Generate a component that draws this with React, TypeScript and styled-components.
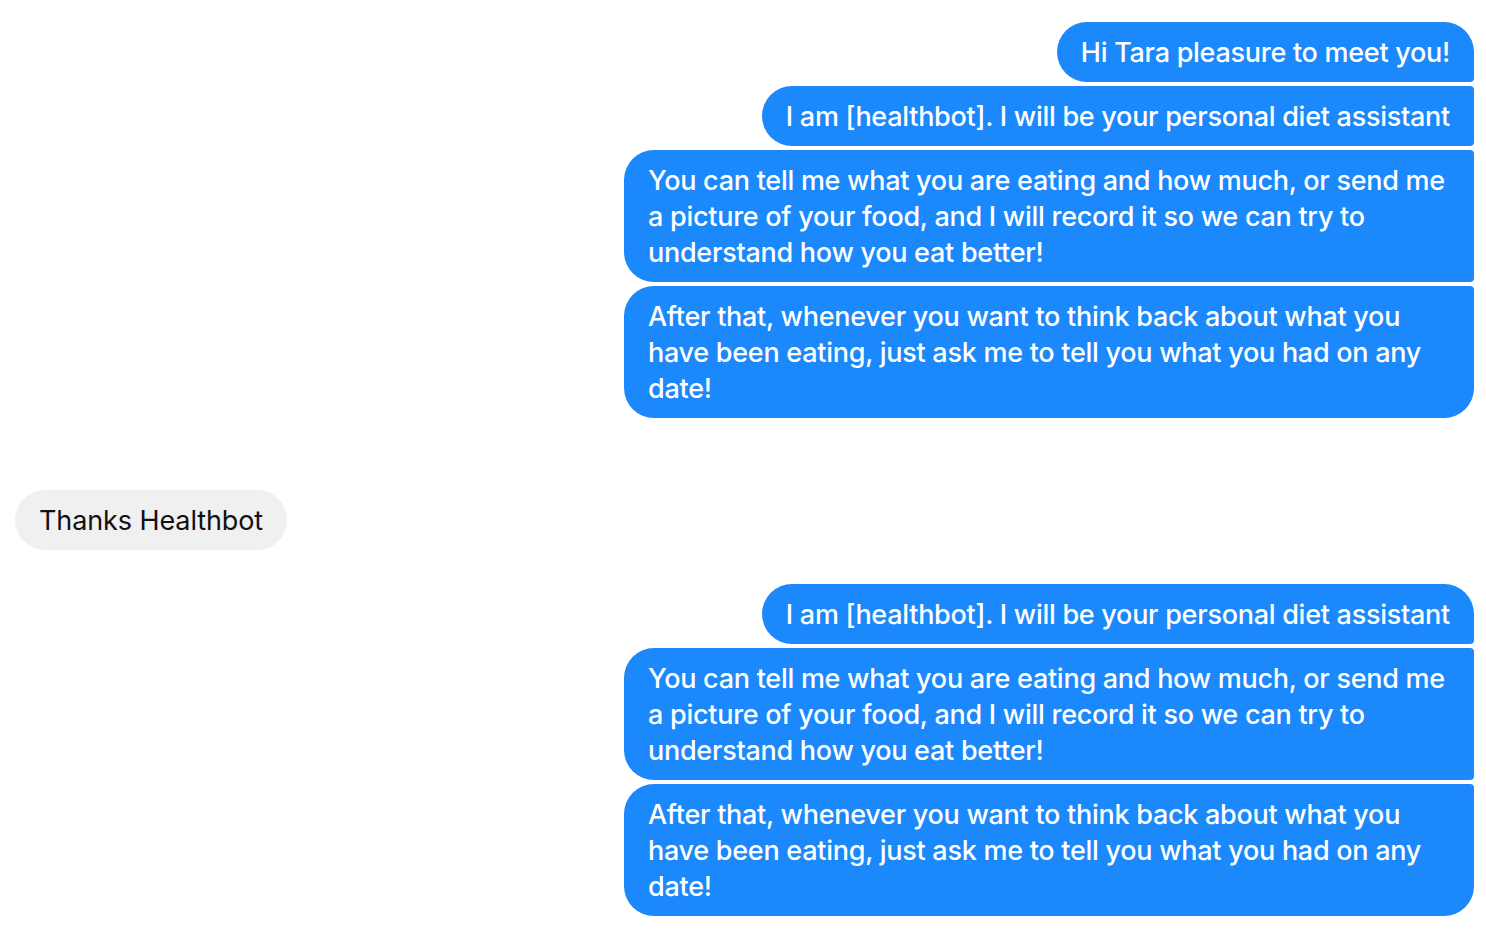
import React from "react";
import styled, { createGlobalStyle } from "styled-components";

const Global = createGlobalStyle`
  html, body { margin: 0; padding: 0; background: #ffffff; }
  body { font-family: "Inter", "Liberation Sans", sans-serif; -webkit-font-smoothing: antialiased; }
`;

const Page = styled.div`
  display: flex;
  flex-direction: column;
  padding: 22px 12px 0 15px;
`;

const Group = styled.div<{ $side: "left" | "right"; $mt?: number }>`
  display: flex;
  flex-direction: column;
  align-items: ${(p) => (p.$side === "right" ? "flex-end" : "flex-start")};
  gap: 4px;
  margin-top: ${(p) => p.$mt ?? 0}px;
`;

type Pos = "single" | "first" | "middle" | "last";

const radius = (side: "left" | "right", pos: Pos) => {
  const big = 30;
  const small = 4;
  if (pos === "single") return `${big}px`;
  const topInner = pos === "first" ? big : small;
  const bottomInner = pos === "last" ? big : small;
  if (side === "right") {
    return `${big}px ${topInner}px ${bottomInner}px ${big}px`;
  }
  return `${topInner}px ${big}px ${big}px ${bottomInner}px`;
};

const Bubble = styled.div<{ $side: "left" | "right"; $pos: Pos }>`
  box-sizing: border-box;
  max-width: 850px;
  padding: 13px 24px 11px 24px;
  font-size: 27px;
  line-height: 36px;
  letter-spacing: ${(p) => (p.$side === "right" ? "-0.27px" : "-0.1px")};
  font-weight: ${(p) => (p.$side === "right" ? 500 : 400)};
  border-radius: ${(p) => radius(p.$side, p.$pos)};
  background: ${(p) => (p.$side === "right" ? "#1b88fb" : "#f0f0f0")};
  color: ${(p) => (p.$side === "right" ? "#ffffff" : "#111111")};
`;

const intro = [
  "I am [healthbot]. I will be your personal diet assistant",
  "You can tell me what you are eating and how much, or send me a picture of your food, and I will record it so we can try to understand how you eat better!",
  "After that, whenever you want to think back about what you have been eating, just ask me to tell you what you had on any date!",
];

const posOf = (i: number, n: number): Pos =>
  n === 1 ? "single" : i === 0 ? "first" : i === n - 1 ? "last" : "middle";

const RightGroup = ({ msgs, mt }: { msgs: string[]; mt?: number }) => (
  <Group $side="right" $mt={mt}>
    {msgs.map((m, i) => (
      <Bubble key={i} $side="right" $pos={posOf(i, msgs.length)}>
        {m}
      </Bubble>
    ))}
  </Group>
);

export default function App() {
  return (
    <>
      <Global />
      <Page>
        <RightGroup msgs={["Hi Tara pleasure to meet you!", ...intro]} />
        <Group $side="left" $mt={72}>
          <Bubble $side="left" $pos="single">Thanks Healthbot</Bubble>
        </Group>
        <RightGroup msgs={intro} mt={34} />
      </Page>
    </>
  );
}
